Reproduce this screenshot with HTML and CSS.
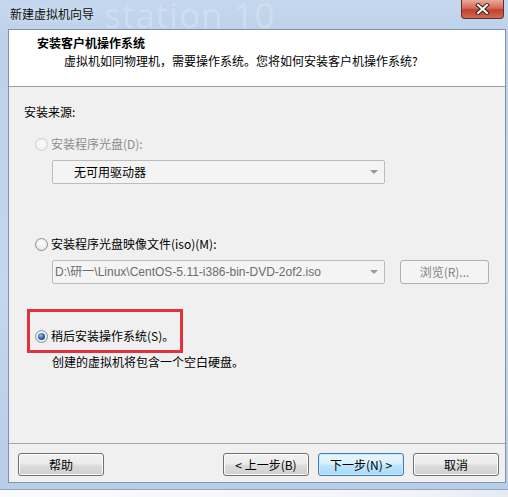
FILE: index.html
```html
<!DOCTYPE html>
<html>
<head>
<meta charset="utf-8">
<link rel="stylesheet" href="styles.css">
</head>
<body>
<div class="screen">
  <div class="window">
    <div class="titlebar">
      <span class="ghost">station 10</span>
      <span class="title">新建虚拟机向导</span>
      <span class="close"><svg width="17" height="12" viewBox="0 0 17 12"><path d="M4 2 L13 10 M13 2 L4 10" stroke="#3a2020" stroke-width="4" stroke-linecap="square"/><path d="M4 2 L13 10 M13 2 L4 10" stroke="#ffffff" stroke-width="2" stroke-linecap="square"/></svg></span>
    </div>
    <div class="client">
      <div class="header">
        <div class="h-title">安装客户机操作系统</div>
        <div class="h-sub">虚拟机如同物理机，需要操作系统。您将如何安装客户机操作系统?</div>
      </div>
      <div class="body">
        <div class="label">安装来源:</div>
        <div class="radio-row row1 disabled"><span class="radio"></span><span>安装程序光盘(D):</span></div>
        <div class="combo combo1"><span class="combo-text dark">无可用驱动器</span><span class="arrow"></span></div>
        <div class="radio-row row2"><span class="radio"></span><span>安装程序光盘映像文件(iso)(M):</span></div>
        <div class="iso-row">
          <div class="combo combo2"><span class="combo-text grey">D:\研一\Linux\CentOS-5.11-i386-bin-DVD-2of2.iso</span><span class="arrow"></span></div>
          <div class="btn disabled-btn">浏览(R)...</div>
        </div>
        <div class="highlight">
          <div class="radio-row"><span class="radio checked"></span><span>稍后安装操作系统(S)。</span></div>
        </div>
        <div class="desc">创建的虚拟机将包含一个空白硬盘。</div>
      </div>
      <div class="footer">
        <div class="btn">帮助</div>
        <div class="spacer"></div>
        <div class="btn">&lt; 上一步(B)</div>
        <div class="btn default">下一步(N) &gt;</div>
        <div class="btn">取消</div>
      </div>
    </div>
  </div>
  <div class="below"></div>
</div>
</body>
</html>
```
FILE: styles.css
```css
* { box-sizing: border-box; }
html, body { margin: 0; padding: 0; }
body {
  font-family: "Noto Sans CJK SC", "Liberation Sans", sans-serif;
  font-size: 12px;
  color: #000;
  background: #f4f6f9;
}
.screen {
  width: 508px;
  height: 497px;
  overflow: hidden;
  background: #f6f7f9;
}
.window {
  height: 490px;
  padding: 0 2px 6px 8px;
  background: linear-gradient(180deg, #c4d7ee 0%, #bcd1ea 8%, #c3d7ee 60%, #b7cde8 100%);
  border-bottom: 1px solid #8fa6c2;
  display: flex;
  flex-direction: column;
}
.titlebar {
  height: 29px;
  position: relative;
  display: flex;
  align-items: flex-start;
  justify-content: space-between;
  overflow: hidden;
}
.ghost {
  position: absolute;
  left: 96px;
  top: 0;
  font-family: "Open Sans", "Liberation Sans", sans-serif;
  font-size: 35px;
  line-height: 29px;
  letter-spacing: 1px;
  color: #d3e0f0;
  opacity: 0.8;
  white-space: nowrap;
}
.title {
  position: relative;
  margin-top: 6px;
  margin-left: 2px;
  line-height: 16px;
  color: #0b0b0b;
  text-shadow: 0 0 6px #e4eefa;
}
.close {
  position: relative;
  width: 43px;
  height: 19px;
  margin-right: 2px;
  border: 1px solid #6b2b2b;
  border-top: none;
  border-radius: 0 0 4px 4px;
  background: linear-gradient(180deg, #e9a99c 0%, #d56a55 45%, #c2412c 55%, #d06a4f 100%);
  display: flex;
  align-items: center;
  justify-content: center;
}
.client {
  flex: 1;
  display: flex;
  flex-direction: column;
  border: 1px solid #7f93ab;
  background: #f0f0f0;
}
.header {
  height: 57px;
  background: #ffffff;
  border-bottom: 1px solid #a0a0a0;
  padding: 5px 0 0 28px;
}
.h-title {
  font-weight: bold;
  line-height: 16px;
}
.h-sub {
  margin-top: 2px;
  margin-left: 27px;
  line-height: 16px;
}
.body {
  height: 356px;
  padding: 17px 0 0 15px;
  display: flex;
  flex-direction: column;
  align-items: flex-start;
}
.label { line-height: 16px; }
.radio-row {
  display: flex;
  align-items: center;
  gap: 3px;
  line-height: 16px;
  height: 16px;
}
.row1 { margin: 16px 0 0 11px; }
.row2 { margin: 52px 0 0 11px; }
.disabled { color: #8d8d8d; }
.radio {
  width: 13px;
  height: 13px;
  border-radius: 50%;
  border: 1px solid #8e8f8f;
  background: radial-gradient(circle at 50% 40%, #ffffff 0%, #f0f0f0 50%, #d8d8d8 100%);
  display: inline-flex;
  align-items: center;
  justify-content: center;
}
.disabled .radio {
  border-color: #cfcfcf;
  background: radial-gradient(circle at 50% 40%, #fafafa 0%, #ededed 100%);
}
.radio.checked::after {
  content: "";
  width: 7px;
  height: 7px;
  border-radius: 50%;
  background: radial-gradient(circle at 40% 35%, #9cc3ee 0%, #2f6bb3 45%, #10386e 100%);
}
.combo {
  height: 24px;
  border: 1px solid #bcbcbc;
  border-radius: 2px;
  background: #f4f4f4;
  display: flex;
  align-items: center;
  justify-content: space-between;
}
.combo1 {
  width: 333px;
  margin: 8px 0 0 28px;
  padding: 0 6px 0 21px;
}
.combo2 {
  width: 333px;
  padding: 0 6px 0 2px;
}
.combo-text { line-height: 16px; white-space: nowrap; }
.dark { color: #000; }
.grey { color: #6d6d6d; font-family: "Liberation Sans", "Noto Sans CJK SC", sans-serif; }
.arrow {
  width: 0;
  height: 0;
  border-left: 4px solid transparent;
  border-right: 4px solid transparent;
  border-top: 4px solid #9a9a9a;
}
.iso-row {
  margin: 8px 0 0 28px;
  display: flex;
  gap: 15px;
}
.btn {
  width: 86px;
  height: 23px;
  border: 1px solid #707070;
  border-radius: 3px;
  background: linear-gradient(180deg, #f2f2f2 0%, #ebebeb 48%, #dddddd 52%, #cfcfcf 100%);
  display: flex;
  align-items: center;
  justify-content: center;
  line-height: 16px;
  color: #000;
  box-shadow: inset 0 0 0 1px #fcfcfc;
}
.disabled-btn {
  width: 89px;
  height: 24px;
  border-color: #adb2b5;
  background: #f4f4f4;
  color: #838383;
  box-shadow: none;
}
.default {
  border-color: #3c7fb1;
  background: linear-gradient(180deg, #eaf6fd 0%, #d9f0fc 48%, #bee6fd 52%, #a7d9f5 100%);
  box-shadow: inset 0 0 0 1px #cbe9fa;
}
.highlight {
  margin: 25px 0 0 3px;
  width: 156px;
  height: 44px;
  border: 3px solid #e2323d;
  padding: 16px 0 0 5px;
}
.desc {
  margin: 1px 0 0 28px;
  line-height: 16px;
}
.footer {
  flex: 1;
  border-top: 1px solid #a8a8a8;
  display: flex;
  align-items: flex-start;
  gap: 9px;
  padding: 9px 6px 0 9px;
}
.spacer { flex: 1; }
.below { height: 7px; background: linear-gradient(90deg, #fafbfc 0%, #f2f4f7 80%, #e6ebf2 100%); }
```
